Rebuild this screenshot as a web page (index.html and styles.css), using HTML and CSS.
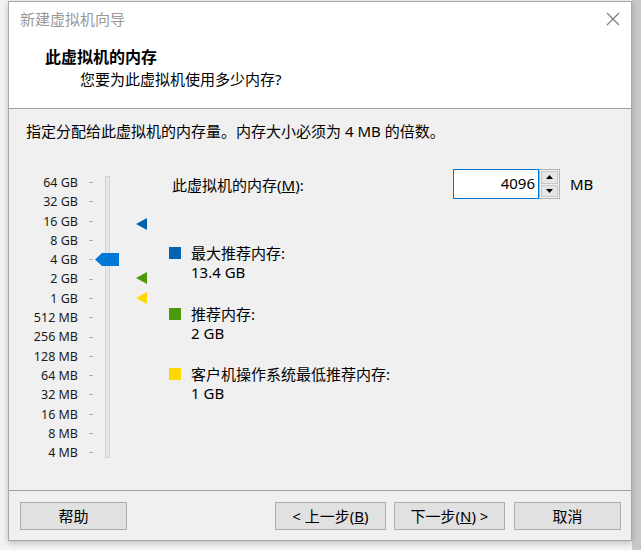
FILE: index.html
```html
<!DOCTYPE html>
<html lang="zh-CN">
<head>
<meta charset="utf-8">
<title>新建虚拟机向导</title>
<link rel="stylesheet" href="styles.css">
</head>
<body>
<div class="window">
  <div class="titlebar">
    <span class="title">新建虚拟机向导</span>
    <svg class="close" width="14" height="14" viewBox="0 0 14 14"><path d="M1 1L13 13M13 1L1 13" stroke="#7a7a7a" stroke-width="1.1" fill="none"/></svg>
  </div>
  <div class="header">
    <div class="h1">此虚拟机的内存</div>
    <div class="h2">您要为此虚拟机使用多少内存?</div>
  </div>
  <div class="body">
    <p class="intro">指定分配给此虚拟机的内存量。内存大小必须为 4 MB 的倍数。</p>
    <div class="main">
      <div class="slider">
        <div class="track"></div>
        <span class="lbl">64 GB</span><i class="tick"></i>
        <span class="lbl">32 GB</span><i class="tick"></i>
        <span class="lbl">16 GB</span><i class="tick"></i>
        <span class="lbl">8 GB</span><i class="tick"></i>
        <span class="lbl">4 GB</span><i class="tick"></i>
        <span class="lbl">2 GB</span><i class="tick"></i>
        <span class="lbl">1 GB</span><i class="tick"></i>
        <span class="lbl">512 MB</span><i class="tick"></i>
        <span class="lbl">256 MB</span><i class="tick"></i>
        <span class="lbl">128 MB</span><i class="tick"></i>
        <span class="lbl">64 MB</span><i class="tick"></i>
        <span class="lbl">32 MB</span><i class="tick"></i>
        <span class="lbl">16 MB</span><i class="tick"></i>
        <span class="lbl">8 MB</span><i class="tick"></i>
        <span class="lbl">4 MB</span><i class="tick"></i>
        <svg class="mk mk-max" width="11" height="12" viewBox="0 0 11 12"><polygon points="0,6 11,0 11,12" fill="#0063b1"/></svg>
        <svg class="mk mk-rec" width="11" height="12" viewBox="0 0 11 12"><polygon points="0,6 11,0 11,12" fill="#4c9a0c"/></svg>
        <svg class="mk mk-min" width="11" height="12" viewBox="0 0 11 12"><polygon points="0,6 11,0 11,12" fill="#ffd800"/></svg>
        <svg class="thumb" width="24" height="13" viewBox="0 0 24 13"><polygon points="0,6.5 7,0 24,0 24,13 7,13" fill="#0078d7"/></svg>
      </div>
      <div class="panel">
        <div class="memrow">
          <span class="memlabel">此虚拟机的内存(<span class="u">M</span>):</span>
          <span class="input">4096</span>
          <span class="spin">
            <span class="spinbtn"><svg width="7" height="4" viewBox="0 0 7 4"><polygon points="0,4 3.5,0 7,4" fill="#000"/></svg></span>
            <span class="spinbtn"><svg width="7" height="4" viewBox="0 0 7 4"><polygon points="0,0 7,0 3.5,4" fill="#000"/></svg></span>
          </span>
          <span class="unit">MB</span>
        </div>
        <div class="legend">
          <div class="item">
            <span class="sq sq-max"></span>
            <div class="itext"><div>最大推荐内存:</div><div>13.4 GB</div></div>
          </div>
          <div class="item">
            <span class="sq sq-rec"></span>
            <div class="itext"><div>推荐内存:</div><div>2 GB</div></div>
          </div>
          <div class="item">
            <span class="sq sq-min"></span>
            <div class="itext"><div>客户机操作系统最低推荐内存:</div><div>1 GB</div></div>
          </div>
        </div>
      </div>
    </div>
  </div>
  <div class="footer">
    <button class="btn btn-help">帮助</button>
    <button class="btn btn-mid">&lt; 上一步(<span class="u">B</span>)</button>
    <button class="btn btn-mid">下一步(<span class="u">N</span>) &gt;</button>
    <button class="btn btn-cancel">取消</button>
  </div>
</div>
</body>
</html>
```
FILE: styles.css
```css
* { box-sizing: border-box; }

body {
  margin: 0;
  width: 641px;
  height: 550px;
  overflow: hidden;
  background: linear-gradient(to right, #f3f3f3 632px, #c9c9c9 632px);
  font-family: "Noto Sans", "Noto Sans CJK SC", sans-serif;
  font-size: 15px;
  color: #000;
}

.window {
  margin: 1px 0 0 8px;
  width: 624px;
  height: 540px;
  border: 1px solid #a8a8a8;
  background: #f0f0f0;
  display: flex;
  flex-direction: column;
  box-shadow: 0 2px 6px rgba(0, 0, 0, 0.22);
}

.titlebar {
  height: 36px;
  flex: none;
  background: #fff;
  display: flex;
  align-items: center;
  justify-content: space-between;
  padding: 0 11px 2px 11px;
}

.title {
  color: #999;
  line-height: 20px;
}

.header {
  height: 71px;
  flex: none;
  background: #fff;
  border-bottom: 1px solid #a0a0a0;
  padding: 9px 0 0 36px;
}

.h1 {
  font-weight: bold;
  font-size: 16px;
  line-height: 20px;
}

.h2 {
  line-height: 20px;
  margin: 2px 0 0 35px;
}

.body {
  flex: 1;
  padding: 12px 0 0 17px;
}

.intro {
  margin: 0;
  line-height: 20px;
}

.main {
  display: flex;
  align-items: flex-start;
  margin-top: 32px;
}

.slider {
  position: relative;
  display: grid;
  grid-template-columns: 52px 11px 4px 12px 5px 26px 12px;
  grid-template-rows: repeat(15, 19.3px);
  grid-auto-flow: row;
}

.lbl {
  grid-column: 1;
  font-size: 12.5px;
  line-height: 19.3px;
  text-align: right;
  white-space: nowrap;
  color: #1a1a1a;
}

.tick {
  grid-column: 3;
  align-self: center;
  height: 1px;
  background: #b0b0b0;
}

.track {
  grid-column: 5;
  grid-row: 1 / -1;
  margin: 3px 0 4px;
  background: #e7e7e7;
  border: 1px solid #d4d4d4;
}

.mk {
  grid-column: 7;
  align-self: center;
  display: block;
}

.mk-max { grid-row: 3; margin-top: 5px; }
.mk-rec { grid-row: 6; margin-top: -2px; }
.mk-min { grid-row: 7; }

.thumb {
  position: absolute;
  left: 69px;
  top: 80px;
  display: block;
}

.panel {
  margin: -4px 0 0 21px;
  display: flex;
  flex-direction: column;
}

.memrow {
  display: flex;
  align-items: center;
  height: 30px;
}

.memlabel {
  width: 284px;
  padding-left: 3px;
  line-height: 20px;
  margin-top: 2px;
}

.u { text-decoration: underline; }

.input {
  width: 86px;
  height: 30px;
  border: 1px solid #0078d7;
  background: #fff;
  text-align: right;
  padding-right: 3px;
  line-height: 27px;
}

.spin {
  width: 21px;
  height: 30px;
  border: 1px solid #b4b4b4;
  background: #f0f0f0;
  display: flex;
  flex-direction: column;
  padding: 1px;
  gap: 1px;
}

.spinbtn {
  flex: 1;
  background: #e5e5e5;
  border: 1px solid #c8c8c8;
  display: flex;
  align-items: center;
  justify-content: center;
}

.spinbtn svg { display: block; }

.unit {
  margin-left: 10px;
  line-height: 20px;
}

.legend {
  margin-top: 45px;
  display: flex;
  flex-direction: column;
  gap: 22.5px;
}

.item {
  display: flex;
  align-items: flex-start;
}

.sq {
  width: 12px;
  height: 12px;
  margin: 3px 10px 0 0;
  flex: none;
}

.sq-max { background: #0063b1; }
.sq-rec { background: #4c9a0c; }
.sq-min { background: #ffd800; }

.itext { line-height: 19px; }

.footer {
  height: 50px;
  flex: none;
  border-top: 1px solid #a0a0a0;
  padding: 11px 10px 0 11px;
  display: flex;
  align-items: flex-start;
  gap: 8px;
}

.btn {
  height: 28px;
  border: 1px solid #adadad;
  background: #e1e1e1;
  font-family: inherit;
  font-size: 15px;
  color: #000;
  padding: 0;
  display: flex;
  align-items: center;
  justify-content: center;
  line-height: 20px;
}

.btn-help { width: 107px; margin-right: auto; }
.btn-mid { width: 111px; }
.btn-cancel { width: 107px; margin-left: 1px; }
```
